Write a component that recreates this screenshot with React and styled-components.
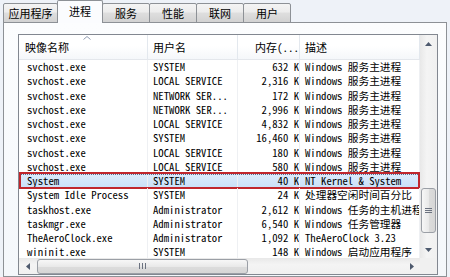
import React from 'react';
import styled, { createGlobalStyle } from 'styled-components';

const GlobalStyle = createGlobalStyle`
	html, body {
		margin: 0;
		padding: 0;
	}
	body {
		width: 450px;
		height: 277px;
		overflow: hidden;
		background: #eef2f8;
		color: #000;
		font-family: "Noto Sans Mono CJK SC", "Liberation Mono", "Noto Sans CJK SC", monospace;
	}
`;

const Window = styled.div`
	width: 450px;
	height: 277px;
	padding: 0 3px;
	box-sizing: border-box;
	display: flex;
	flex-direction: column;
`;

const TabStrip = styled.div`
	display: flex;
	align-items: flex-end;
	height: 23px;
	position: relative;
	z-index: 1;
	margin-bottom: -1px;
`;

const Tab = styled.div`
	box-sizing: border-box;
	width: ${({ $w }) => $w}px;
	height: ${({ $active }) => ($active ? 23 : 20)}px;
	margin-left: -1px;
	border: 1px solid #8d9196;
	border-bottom: ${({ $active }) => ($active ? 'none' : '1px solid #8d9196')};
	border-radius: 2px 2px 0 0;
	background: ${({ $active }) =>
		$active
			? '#fbfcfe'
			: 'linear-gradient(#f4f4f4 0%, #ececec 45%, #dedede 50%, #d2d2d2 100%)'};
	font-size: 11px;
	line-height: ${({ $active }) => ($active ? 20 : 18)}px;
	text-align: center;
	&:first-child {
		margin-left: 0;
	}
`;

const Panel = styled.div`
	flex: 1;
	border: 1px solid #8d9196;
	background: linear-gradient(#fcfdfe, #f4f7fb);
	padding: 11px 8px 0 14px;
	min-height: 0;
`;

const ListBox = styled.div`
	width: 420px;
	height: 241px;
	box-sizing: border-box;
	border: 1px solid #828790;
	background: #fff;
	display: grid;
	grid-template-columns: 401px 17px;
	grid-template-rows: 1fr 16px;
`;

const Viewport = styled.div`
	overflow: hidden;
	display: flex;
	flex-direction: column;
`;

const COLS = '129px 90px 62px 120px';

const HeaderRow = styled.div`
	display: grid;
	grid-template-columns: ${COLS};
	height: 25px;
	flex: none;
	background: linear-gradient(#ffffff 0%, #ffffff 45%, #f5f7fa 100%);
	border-bottom: 1px solid #e4e7ec;
	box-sizing: border-box;
`;

const HeaderCell = styled.div`
	position: relative;
	font-size: 11px;
	line-height: 24px;
	padding: 0 ${({ $right }) => ($right ? '9px' : '0')} 0 ${({ $pad }) => $pad}px;
	text-align: ${({ $right }) => ($right ? 'right' : 'left')};
	border-right: 1px solid #e3e8ee;
	white-space: nowrap;
	overflow: hidden;
`;

const SortMark = styled.svg`
	position: absolute;
	top: 1px;
	left: 64px;
`;

const Row = styled.div`
	position: relative;
	display: grid;
	grid-template-columns: ${COLS};
	height: 14.25px;
	flex: none;
	box-sizing: border-box;
	background: ${({ $selected }) => ($selected ? 'linear-gradient(#dcebfb, #c9e0f8)' : 'transparent')};
	outline: ${({ $selected }) => ($selected ? '1px dotted #5a7090' : 'none')};
	outline-offset: -1px;
`;

const Cell = styled.div`
	font-size: 10.7px;
	line-height: 14.25px;
	white-space: nowrap;
	overflow: hidden;
	padding: 0 ${({ $right }) => ($right ? '7px' : '0')} 0 ${({ $pad }) => $pad}px;
	text-align: ${({ $right }) => ($right ? 'right' : 'left')};
	border-right: 1px solid #eef0f3;
`;

const RedMark = styled.div`
	position: absolute;
	top: -2px;
	bottom: -1px;
	left: 0;
	right: 0;
	border: 2px solid #c0262c;
	pointer-events: none;
`;

const VScroll = styled.div`
	grid-row: 1;
	grid-column: 2;
	display: flex;
	flex-direction: column;
	background: linear-gradient(90deg, #e8e8e8, #f4f4f4 40%, #f0f0f0);
`;

const HScroll = styled.div`
	grid-row: 2;
	grid-column: 1;
	display: flex;
	background: linear-gradient(#e8e8e8, #f4f4f4 40%, #f0f0f0);
`;

const Corner = styled.div`
	grid-row: 2;
	grid-column: 2;
	background: #f0f0f0;
`;

const ArrowButton = styled.div`
	flex: none;
	width: ${({ $h }) => ($h ? 17 : 17)}px;
	height: ${({ $h }) => ($h ? 16 : 17)}px;
	display: flex;
	align-items: center;
	justify-content: center;
`;

const Track = styled.div`
	flex: 1;
	display: flex;
	flex-direction: ${({ $h }) => ($h ? 'row' : 'column')};
	padding: ${({ $h }) => ($h ? '0 0' : '0 1px')};
`;

const Thumb = styled.div`
	box-sizing: border-box;
	border: 1px solid #9b9fa6;
	border-radius: 3px;
	display: flex;
	align-items: center;
	justify-content: center;
	background: ${({ $h }) =>
		$h
			? 'linear-gradient(#f7f7f7, #e9e9e9 50%, #dcdcdc 51%, #d6d6d6)'
			: 'linear-gradient(90deg, #f7f7f7, #e9e9e9 50%, #dcdcdc 51%, #d6d6d6)'};
	${({ $h }) =>
		$h
			? 'width: 211px; height: 15px; margin: 0 0 0 1px; align-self: center;'
			: 'height: 45px; width: 15px; margin-top: 136px;'}
`;

const Arrow = ({ dir }) => {
	const pts = {
		up: '0,4 3.5,0 7,4',
		down: '0,0 3.5,4 7,0',
		left: '4,0 0,3.5 4,7',
		right: '0,0 4,3.5 0,7',
	}[dir];
	const horiz = dir === 'left' || dir === 'right';
	return (
		<svg width={horiz ? 4 : 7} height={horiz ? 7 : 4} viewBox={horiz ? '0 0 4 7' : '0 0 7 4'}>
			<polygon points={pts} fill="#4e5a6e" />
		</svg>
	);
};

const Grip = ({ h }) =>
	h ? (
		<svg width="7" height="6" viewBox="0 0 7 6">
			<path d="M0.5 0v6M3.5 0v6M6.5 0v6" stroke="#6b7280" strokeWidth="1" />
		</svg>
	) : (
		<svg width="7" height="6" viewBox="0 0 7 6">
			<path d="M0 0.5h7M0 2.5h7M0 4.5h7" stroke="#6b7280" strokeWidth="1" />
		</svg>
	);

const tabs = [
	{ label: '应用程序', w: 55 },
	{ label: '进程', w: 46, active: true },
	{ label: '服务', w: 48 },
	{ label: '性能', w: 48 },
	{ label: '联网', w: 48 },
	{ label: '用户', w: 48 },
];

const SVC = 'Windows 服务主进程';

const processes = [
	['svchost.exe', 'SYSTEM', '632 K', SVC],
	['svchost.exe', 'LOCAL SERVICE', '2,316 K', SVC],
	['svchost.exe', 'NETWORK SER...', '172 K', SVC],
	['svchost.exe', 'NETWORK SER...', '2,996 K', SVC],
	['svchost.exe', 'LOCAL SERVICE', '4,832 K', SVC],
	['svchost.exe', 'SYSTEM', '16,460 K', SVC],
	['svchost.exe', 'LOCAL SERVICE', '180 K', SVC],
	['svchost.exe', 'LOCAL SERVICE', '580 K', SVC],
	['System', 'SYSTEM', '40 K', 'NT Kernel & System', true],
	['System Idle Process', 'SYSTEM', '24 K', '处理器空闲时间百分比'],
	['taskhost.exe', 'Administrator', '2,612 K', 'Windows 任务的主机进程'],
	['taskmgr.exe', 'Administrator', '6,540 K', 'Windows 任务管理器'],
	['TheAeroClock.exe', 'Administrator', '1,092 K', 'TheAeroClock 3.23'],
	['wininit.exe', 'SYSTEM', '148 K', 'Windows 启动应用程序'],
];

export default function App() {
	return (
		<>
			<GlobalStyle />
			<Window>
				<TabStrip>
					{tabs.map((t) => (
						<Tab key={t.label} $w={t.w} $active={t.active}>
							{t.label}
						</Tab>
					))}
				</TabStrip>
				<Panel>
					<ListBox>
						<Viewport>
							<HeaderRow>
								<HeaderCell $pad={6}>
									映像名称
									<SortMark width="8" height="4" viewBox="0 0 8 4">
										<polyline points="0.5,3.5 4,0.5 7.5,3.5" fill="none" stroke="#8f9bb0" strokeWidth="1" />
									</SortMark>
								</HeaderCell>
								<HeaderCell $pad={5}>用户名</HeaderCell>
								<HeaderCell $right>内存(...</HeaderCell>
								<HeaderCell $pad={5}>描述</HeaderCell>
							</HeaderRow>
							{processes.map(([name, user, mem, desc, selected], i) => (
								<Row key={i} $selected={selected}>
									<Cell $pad={8}>{name}</Cell>
									<Cell $pad={5}>{user}</Cell>
									<Cell $right>{mem}</Cell>
									<Cell $pad={5}>{desc}</Cell>
									{selected && <RedMark />}
								</Row>
							))}
						</Viewport>
						<VScroll>
							<ArrowButton>
								<Arrow dir="up" />
							</ArrowButton>
							<Track>
								<Thumb>
									<Grip />
								</Thumb>
							</Track>
							<ArrowButton>
								<Arrow dir="down" />
							</ArrowButton>
						</VScroll>
						<HScroll>
							<ArrowButton $h>
								<Arrow dir="left" />
							</ArrowButton>
							<Track $h>
								<Thumb $h>
									<Grip h />
								</Thumb>
							</Track>
							<ArrowButton $h>
								<Arrow dir="right" />
							</ArrowButton>
						</HScroll>
						<Corner />
					</ListBox>
				</Panel>
			</Window>
		</>
	);
}
